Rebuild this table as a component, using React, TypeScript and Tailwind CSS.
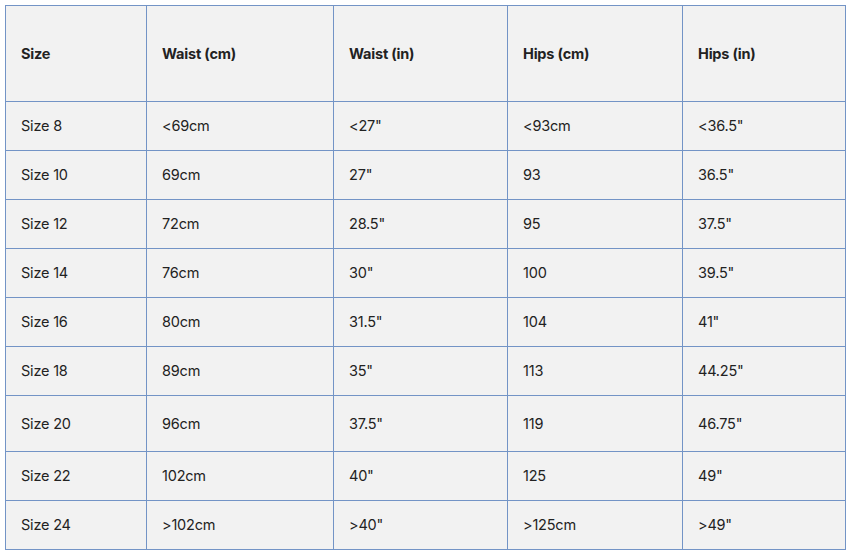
import React from "react";

const headers = ["Size", "Waist (cm)", "Waist (in)", "Hips (cm)", "Hips (in)"];

const rows: string[][] = [
  ["Size 8", "<69cm", "<27\"", "<93cm", "<36.5\""],
  ["Size 10", "69cm", "27\"", "93", "36.5\""],
  ["Size 12", "72cm", "28.5\"", "95", "37.5\""],
  ["Size 14", "76cm", "30\"", "100", "39.5\""],
  ["Size 16", "80cm", "31.5\"", "104", "41\""],
  ["Size 18", "89cm", "35\"", "113", "44.25\""],
  ["Size 20", "96cm", "37.5\"", "119", "46.75\""],
  ["Size 22", "102cm", "40\"", "125", "49\""],
  ["Size 24", ">102cm", ">40\"", ">125cm", ">49\""],
];

const App = () => {
  return (
    <div className="bg-white min-h-[556px] pl-[5px] pt-[5px] font-['Inter',sans-serif] text-[#222]">
      <table className="table-fixed border-collapse w-[840px] bg-[#f2f2f2]">
        <colgroup>
          <col className="w-[141px]" />
          <col className="w-[187px]" />
          <col className="w-[174px]" />
          <col className="w-[175px]" />
          <col className="w-[163px]" />
        </colgroup>
        <thead>
          <tr className="h-[96px]">
            {headers.map((h) => (
              <th
                key={h}
                className="border border-[#7394c6] text-left align-middle pl-[15px] text-[14.5px] font-bold tracking-[-0.2px]"
              >
                {h}
              </th>
            ))}
          </tr>
        </thead>
        <tbody>
          {rows.map((r) => (
            <tr
              key={r[0]}
              className={r[0] === "Size 20" ? "h-[56px]" : "h-[49px]"}
            >
              {r.map((c, i) => (
                <td
                  key={i}
                  className="border border-[#7394c6] align-middle pl-[15px] text-[14.5px] font-normal tracking-[-0.2px]"
                >
                  {c}
                </td>
              ))}
            </tr>
          ))}
        </tbody>
      </table>
    </div>
  );
};

export default App;
